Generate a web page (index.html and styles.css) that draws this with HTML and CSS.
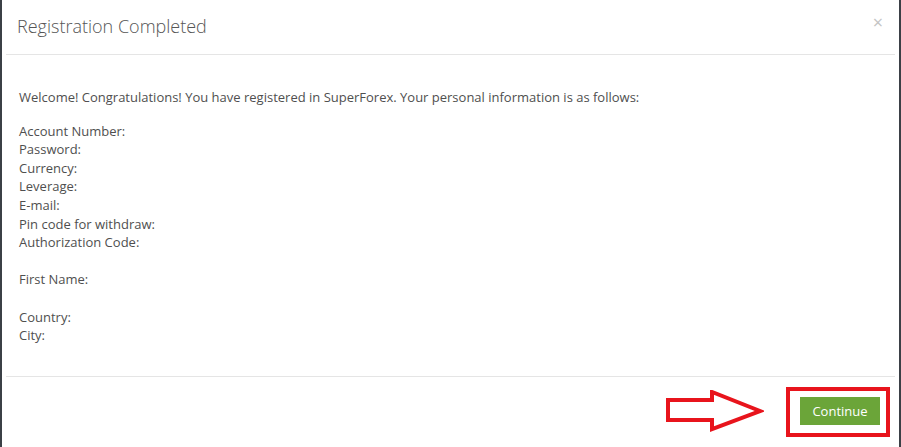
FILE: index.html
```html
<!DOCTYPE html>
<html lang="en">
<head>
<meta charset="utf-8">
<title>Registration Completed</title>
<link rel="stylesheet" href="styles.css">
</head>
<body>
<div class="modal">
  <div class="modal-header">
    <h4 class="modal-title">Registration Completed</h4>
    <span class="close">&times;</span>
  </div>
  <div class="modal-body">
    <p class="welcome">Welcome! Congratulations! You have registered in SuperForex. Your personal information is as follows:</p>
    <div class="info">
      <div>Account Number:</div>
      <div>Password:</div>
      <div>Currency:</div>
      <div>Leverage:</div>
      <div>E-mail:</div>
      <div>Pin code for withdraw:</div>
      <div>Authorization Code:</div>
      <div class="blank">&nbsp;</div>
      <div>First Name:</div>
      <div class="blank">&nbsp;</div>
      <div>Country:</div>
      <div>City:</div>
    </div>
  </div>
  <div class="modal-footer">
    <svg class="arrow" width="100" height="42" viewBox="0 0 100 42">
      <polygon points="4,10 48,10 48,2 96,21 48,39 48,30 4,30" fill="#fff" stroke="#e8141c" stroke-width="4" stroke-linejoin="miter"/>
    </svg>
    <div class="highlight">
      <button class="btn-continue">Continue</button>
    </div>
  </div>
</div>
</body>
</html>
```
FILE: styles.css
```css
html, body {
  margin: 0;
  padding: 0;
  height: 100%;
}
body {
  background: #3b4046;
  font-family: "Open Sans", "Noto Sans", Arial, sans-serif;
  overflow: hidden;
}
.modal {
  margin-left: 2px;
  width: 897px;
  height: 447px;
  background: #fff;
  display: flex;
  flex-direction: column;
}
.modal-header {
  flex: none;
  height: 55px;
  margin: 0 4px 0 4px;
  border-bottom: 1px solid #e5e5e5;
  display: flex;
  align-items: center;
  justify-content: space-between;
  box-sizing: border-box;
  padding: 0 12px 0 11px;
}
.modal-title {
  margin: 0;
  font-size: 18px;
  font-weight: 300;
  color: #555;
  line-height: 1.4;
}
.close {
  font-size: 18px;
  color: #c4c4c4;
  line-height: 1;
  margin-top: -11px;
}
.modal-body {
  flex: none;
  padding: 33px 15px 0 13px;
  color: #4f4f4f;
  font-size: 13px;
  line-height: 18.6px;
  height: 322px;
  box-sizing: border-box;
  margin: 0 4px;
  border-bottom: 1px solid #e5e5e5;
}
.welcome {
  margin: 0 0 15px 0;
}
.modal-footer {
  flex: 1;
  display: flex;
  justify-content: flex-end;
  align-items: flex-start;
  padding: 10px 9px 0 0;
  gap: 22px;
}
.arrow {
  display: block;
  margin-top: 3px;
}
.highlight {
  border: 4px solid #e8141c;
  padding: 6px 6px 8px 10px;
}
.btn-continue {
  display: block;
  width: 80px;
  height: 28px;
  border: none;
  background: #6ba539;
  color: #fff;
  font-family: "Open Sans", "Noto Sans", Arial, sans-serif;
  font-size: 13px;
  padding: 0;
}
```
